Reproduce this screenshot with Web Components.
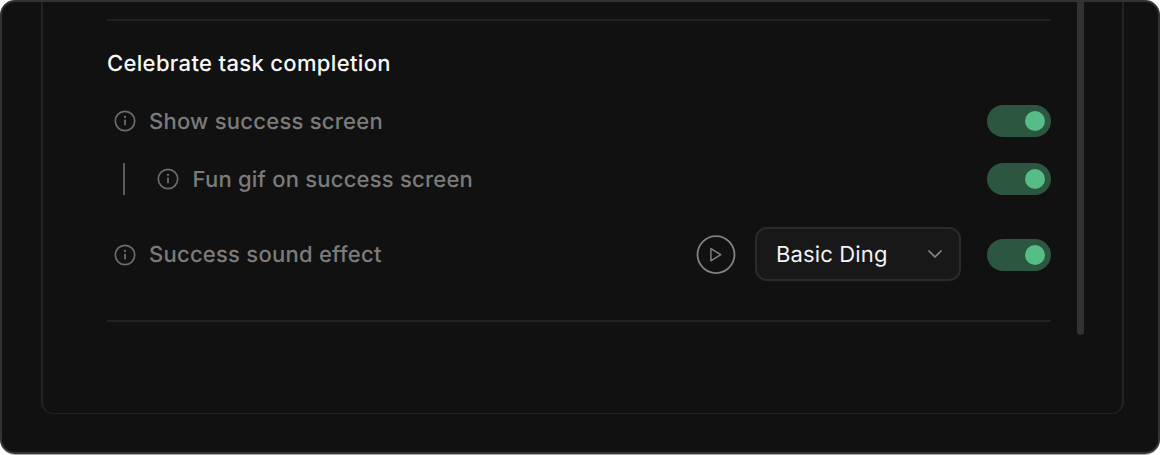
<!DOCTYPE html>
<html lang="en">
<head>
<meta charset="utf-8">
<title>Settings</title>
<style>
html,body{margin:0;height:455px;overflow:hidden;background:#fff}
body{font-family:Inter,"Liberation Sans",sans-serif;text-rendering:geometricPrecision}
</style>
</head>
<body>
<settings-window>
  <settings-section heading="Celebrate task completion">
    <setting-row label="Show success screen"><toggle-switch></toggle-switch></setting-row>
    <setting-row nested label="Fun gif on success screen"><toggle-switch></toggle-switch></setting-row>
    <setting-row tall label="Success sound effect">
      <play-button></play-button>
      <select-box>Basic Ding</select-box>
      <toggle-switch></toggle-switch>
    </setting-row>
  </settings-section>
</settings-window>
<script>
class Base extends HTMLElement {
  constructor() {
    super();
    this.attachShadow({ mode: 'open' });
  }
  connectedCallback() {
    this.shadowRoot.innerHTML = this.render();
  }
}

customElements.define('settings-window', class extends Base {
  render() {
    return `<style>
      :host{display:block;box-sizing:border-box;width:1160px;height:454px;border:2px solid #333;border-radius:15px;background:#111;padding:0 34px 0 39px;overflow:hidden;box-shadow:0 1px 0 #aaa}
      .panel{box-sizing:border-box;display:flex;height:412px;border:2px solid #222;border-bottom-width:1.5px;border-top:0;border-radius:0 0 12px 12px;padding:0 38px 0 64px}
      .content{width:944px}
      .bar{width:7px;height:333px;margin-left:26px;background:#323232;border-radius:0 0 4px 4px}
    </style>
    <div class="panel"><div class="content"><slot></slot></div><div class="bar"></div></div>`;
  }
});

customElements.define('settings-section', class extends Base {
  render() {
    return `<style>
      :host{display:block;box-sizing:border-box;height:320px;padding-top:17px}
      .body{box-sizing:border-box;height:303px;border:solid #222;border-width:2px 0;padding-top:27px}
      h2{margin:0 0 25px;font-size:22px;line-height:32px;font-weight:500;letter-spacing:.34px;color:#f8f8f8}
      .rows{display:flex;flex-direction:column;gap:26px}
    </style>
    <div class="body"><h2>${this.getAttribute('heading')}</h2><div class="rows"><slot></slot></div></div>`;
  }
});

customElements.define('info-icon', class extends Base {
  render() {
    return `<style>:host{display:block;width:22px;height:22px}svg{display:block}</style>
    <svg width="22" height="22" viewBox="0 0 22 22" fill="none" stroke="#6c6c6c">
      <circle cx="11" cy="11" r="9.7" stroke-width="1.7"/>
      <path d="M11 9.8v5.4" stroke-width="1.8"/><circle cx="11" cy="7" r="1.15" fill="#6c6c6c" stroke="none"/>
    </svg>`;
  }
});

customElements.define('setting-row', class extends Base {
  render() {
    return `<style>
      :host{display:flex;align-items:center;height:32px;padding-left:7px}
      :host([nested]){padding-left:16px}
      :host([tall]){height:55px;margin-top:6px}
      .line{width:2px;height:32px;margin-right:32px;background:#5b5b5b}
      .label{margin-left:13px;padding-top:2px;font-size:22px;line-height:32px;font-weight:500;letter-spacing:.25px;color:#7b7b7b;white-space:nowrap}
      :host([nested]) .label{margin-left:13.5px;letter-spacing:.22px}
      :host([tall]) .label{padding-top:1px}
      .controls{display:flex;align-items:center;margin-left:auto}
    </style>
    ${this.hasAttribute('nested') ? '<div class="line"></div>' : ''}
    <info-icon></info-icon><div class="label">${this.getAttribute('label')}</div>
    <div class="controls"><slot></slot></div>`;
  }
});

customElements.define('toggle-switch', class extends Base {
  render() {
    return `<style>
      :host{display:flex;box-sizing:border-box;align-items:center;justify-content:flex-end;width:64px;height:32px;padding-right:6px;border-radius:16px;background:#2c563f}
      .knob{width:20px;height:20px;border-radius:50%;background:#55bd85}
    </style><div class="knob"></div>`;
  }
});

customElements.define('play-button', class extends Base {
  render() {
    return `<style>:host{display:block;width:40px;height:40px;margin-right:19px}svg{display:block}</style>
    <svg width="40" height="40" viewBox="0 0 40 40" fill="none" stroke="#828282">
      <circle cx="20" cy="19.6" r="18.5" stroke-width="1.8"/>
      <path d="M14.9 13.6v12.2L24.8 19.7z" stroke-width="1.4" stroke-linejoin="round"/>
    </svg>`;
  }
});

customElements.define('select-box', class extends Base {
  render() {
    return `<style>
      :host{display:flex;box-sizing:border-box;align-items:center;justify-content:space-between;width:206px;height:54px;margin:0 26px 1px 0;padding:0 16px 0 19px;border:2px solid #2b2b2b;border-radius:12px;background:#181818;font-size:22px;line-height:32px;letter-spacing:.15px;color:#f4f4f4}
      svg{display:block}
      span{padding-top:2px}
    </style><span><slot></slot></span>
    <svg width="16" height="12" viewBox="0 0 16 12" fill="none" stroke="#858585" stroke-width="1.7" stroke-linecap="round" stroke-linejoin="round"><path d="M2 3l6 6 6-6"/></svg>`;
  }
});
</script>
</body>
</html>
